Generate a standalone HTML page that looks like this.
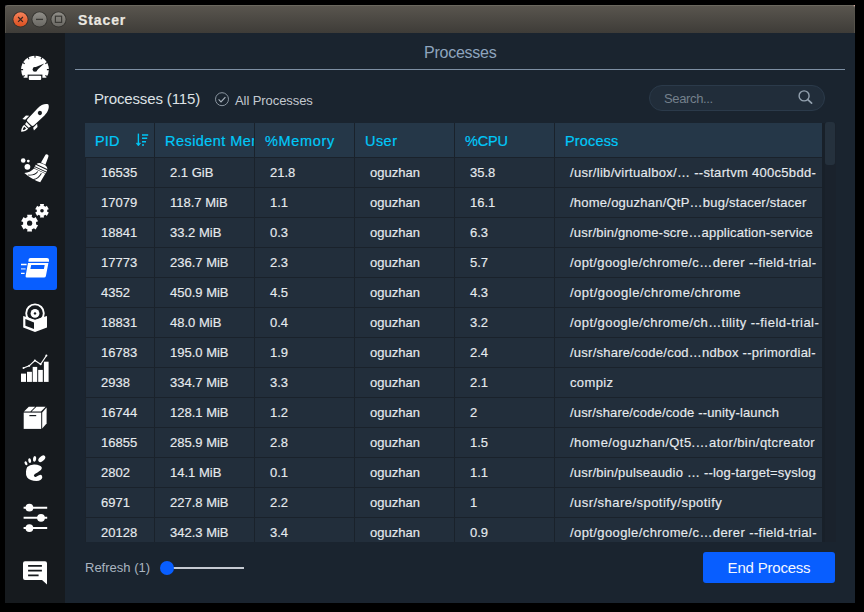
<!DOCTYPE html>
<html><head><meta charset="utf-8">
<style>
*{margin:0;padding:0;box-sizing:border-box}
html,body{width:864px;height:612px;overflow:hidden;background:#000;font-family:"Liberation Sans",sans-serif;position:relative}
div,svg{position:absolute}
#win{left:5px;top:5px;width:850px;height:598px;background:#1a242f}
#titlebar{left:5px;top:5px;width:850px;height:28px;background:linear-gradient(#5a564f,#3e3c38);border-radius:4px 4px 0 0;box-shadow:inset 0 1px 0 #6b685f,inset 1px 0 0 #55524b,inset -1px 0 0 #55524b}
#side{left:5px;top:33px;width:60px;height:570px;background:#161a1e}
.wb{top:12px;width:15px;height:15px;border-radius:50%}
#ttl{left:78px;top:12px;font-size:14px;line-height:16px;font-weight:bold;color:#ebe8e1;letter-spacing:0.9px;-webkit-text-stroke:0.2px #ebe8e1;white-space:nowrap}
.t{white-space:nowrap}
#tbl{left:85px;top:123px;width:737px;height:419px;background:#1a222b;overflow:hidden}
.hd{top:0;height:34px;background:#253748;color:#00c8f8;-webkit-text-stroke:0.2px #00c8f8;font-size:14.5px;letter-spacing:0.45px;line-height:36px;padding-left:10px;overflow:hidden;white-space:nowrap}
.c{height:29px;background:#222e3b;color:#e6eaee;-webkit-text-stroke:0.15px #e6eaee;font-size:13px;line-height:30px;padding-left:15px;overflow:hidden;white-space:nowrap}
.ic{left:5px;width:60px;height:50px}
</style></head><body>
<div id="win"></div>
<div style="left:5px;top:5px;width:5px;height:5px;background:#2d2a33"></div>
<div style="left:850px;top:5px;width:5px;height:5px;background:#d6aca2"></div>
<div id="titlebar"></div>
<svg style="left:5px;top:5px" width="70" height="28" viewBox="5 5 70 28">
<defs>
<linearGradient id="gr" x1="0" y1="0" x2="0" y2="1"><stop offset="0" stop-color="#f5825a"/><stop offset="1" stop-color="#dc5020"/></linearGradient>
<linearGradient id="gg" x1="0" y1="0" x2="0" y2="1"><stop offset="0" stop-color="#908e88"/><stop offset="1" stop-color="#6a6863"/></linearGradient>
</defs>
<circle cx="20.5" cy="19.4" r="8" fill="#34302b"/>
<circle cx="20.5" cy="19.4" r="7.1" fill="url(#gr)"/>
<path d="M18.1,17 L22.9,21.8 M22.9,17 L18.1,21.8" stroke="#3a2620" stroke-width="1.2"/>
<circle cx="39.5" cy="19.4" r="8" fill="#33322e"/>
<circle cx="39.5" cy="19.4" r="7.1" fill="url(#gg)"/>
<path d="M36,19.4 H43" stroke="#3b3a36" stroke-width="1.3"/>
<circle cx="58.5" cy="19.4" r="8" fill="#33322e"/>
<circle cx="58.5" cy="19.4" r="7.1" fill="url(#gg)"/>
<rect x="55.4" y="16.2" width="6.2" height="6.2" fill="none" stroke="#3b3a36" stroke-width="1.2"/>
</svg>
<div id="ttl">Stacer</div>
<div id="side"></div>
<div style="left:13px;top:246px;width:44px;height:44px;background:#085eff;border-radius:3px"></div>
<svg style="left:5px;top:33px" width="60" height="570" viewBox="5 33 60 570"><defs><clipPath id="gclip"><rect x="15" y="50" width="40" height="27.7"/></clipPath></defs><circle cx="35" cy="69.6" r="13.9" fill="#fff" clip-path="url(#gclip)"/><rect x="27.6" y="74.6" width="14.8" height="6" fill="#161a1e"/><rect x="28.8" y="75.8" width="12.4" height="4.2" rx="1" fill="#fff"/><path d="M46.90,69.60L49.50,69.60M45.31,63.65L47.56,62.35M40.95,59.29L42.25,57.04M35.00,57.70L35.00,55.10M29.05,59.29L27.75,57.04M24.69,63.65L22.44,62.35M23.10,69.60L20.50,69.60M45.31,75.55L47.56,76.85M24.69,75.55L22.44,76.85" stroke="#161a1e" stroke-width="1.1"/><circle cx="35" cy="69.4" r="2.4" fill="#161a1e"/><path d="M35.95,70.93 L44.30,63.60 L34.05,67.87Z" fill="#161a1e"/><g transform="translate(48.4,104.5) rotate(45)"><path d="M0,0 C2.9,1.2 5,5.5 5,10.5 L4.5,25.2 Q4.3,26.8 2.9,26.8 L-2.9,26.8 Q-4.3,26.8 -4.5,25.2 L-5,10.5 C-5,5.5 -2.9,1.2 0,0Z" fill="#fff"/><circle cx="0" cy="12" r="2.1" fill="#161a1e"/><path d="M-3.1,28 L3.1,28 L2.6,30.4 L-2.6,30.4Z" fill="#fff"/><path d="M-2.9,31.4 L2.9,31.4 Q3.1,35.4 0,38.6 Q-3.1,35.4 -2.9,31.4Z" fill="#fff"/><path d="M-1.2,32.8 L1.2,32.8 Q1.3,34.8 0,36.2 Q-1.3,34.8 -1.2,32.8Z" fill="#161a1e"/><path d="M5.6,21.6 L8.2,23.6 L8.2,28.6 L5.6,27.2Z" fill="#fff"/><path d="M-5.6,21.6 L-8.2,23.6 L-8.2,28.6 L-5.6,27.2Z" fill="#fff"/></g><circle cx="23.2" cy="160.5" r="2.3" fill="#fff"/><circle cx="28.3" cy="161.1" r="1.4" fill="#fff"/><circle cx="27.4" cy="166.8" r="2.9" fill="#fff"/><g transform="translate(47.1,155.3) rotate(25)"><path d="M-1.8,1 Q-1.8,-0.9 0,-0.9 Q1.8,-0.9 1.8,1 L2.4,9.2 L-2.4,9.2Z" fill="#fff"/><path d="M-6.3,13.4 Q-5.8,9.6 0,9.6 Q5.8,9.6 6.3,13.4 L6.4,17 L-6.4,17Z" fill="#fff"/><path d="M-6.5,12.9 L6.5,12.9 M-6.5,15.5 L6.5,15.5" stroke="#161a1e" stroke-width="0.9"/><path d="M-6.3,17.6 L6.2,17.6 L5.2,27.4 Q-4,28.2 -13.2,25.6 Q-8,23 -6.3,17.6Z" fill="#fff"/><path d="M-1.6,18.6 Q-2.6,23.8 -8.8,25.9 M2.4,18.6 Q2,24.8 -2.2,27.7" stroke="#161a1e" stroke-width="0.9" fill="none"/></g><path d="M35.86,221.09 L37.94,220.73 L37.94,225.67 L35.86,225.31 L34.55,227.56 L35.91,229.19 L31.63,231.66 L30.90,229.67 L28.30,229.67 L27.57,231.66 L23.29,229.19 L24.65,227.56 L23.34,225.31 L21.26,225.67 L21.26,220.73 L23.34,221.09 L24.65,218.84 L23.29,217.21 L27.57,214.74 L28.30,216.73 L30.90,216.73 L31.63,214.74 L35.91,217.21 L34.55,218.84Z" fill="#fff" transform="rotate(30 29.6 223.2)"/><circle cx="29.6" cy="223.2" r="2.6" fill="#161a1e"/><path d="M47.02,209.11 L48.71,208.81 L48.71,212.79 L47.02,212.49 L45.98,214.30 L47.08,215.62 L43.63,217.61 L43.05,216.00 L40.95,216.00 L40.37,217.61 L36.92,215.62 L38.02,214.30 L36.98,212.49 L35.29,212.79 L35.29,208.81 L36.98,209.11 L38.02,207.30 L36.92,205.98 L40.37,203.99 L40.95,205.60 L43.05,205.60 L43.63,203.99 L47.08,205.98 L45.98,207.30Z" fill="#fff" transform="rotate(30 42 210.8)"/><circle cx="42" cy="210.8" r="1.8" fill="#161a1e"/><path d="M28.5,261.7 L28.5,260.1 Q28.5,258.1 30.5,258.1 L47,258.1 Q49,258.1 49,260.1 L49,261.7Z" fill="#fff"/><path d="M28,263 L48.4,263 L45.9,276 Q45.6,277.5 44,277.5 L27,277.5 Q25.3,277.5 25.6,276Z" fill="#fff"/><path d="M31.2,265 L44.7,265 L43.9,268.9 L30.4,268.9Z" fill="#085eff"/><path d="M21,264.5H26.6M21,273.4H24.6" stroke="#fff" stroke-width="1.3"/><path d="M21,268.9H25.6" stroke="#fff" stroke-opacity="0.75" stroke-width="1.3"/><circle cx="35" cy="313.2" r="8.8" fill="none" stroke="#fff" stroke-width="1.9"/><path d="M23.2,316 L35,319.6 L47,316 L47,327.4 L35,332 L23.2,327.4Z" fill="#fff"/><path d="M25.4,319.1 L34,322.5 L34,329.1 L25.4,325.8Z" fill="#161a1e"/><circle cx="35" cy="313.4" r="6.1" fill="#161a1e"/><circle cx="35" cy="313.4" r="4.4" fill="#fff"/><circle cx="35" cy="313.4" r="1.2" fill="#161a1e"/><rect x="21" y="373.6" width="5.0" height="8.3" fill="#fff"/><rect x="27" y="371.8" width="4.9" height="10.1" fill="#fff"/><rect x="32.7" y="366.9" width="4.5" height="15.0" fill="#fff"/><rect x="38.2" y="369.9" width="4.6" height="12.0" fill="#fff"/><rect x="43.9" y="361.7" width="4.7" height="20.2" fill="#fff"/><path d="M23.5,368 L29.2,365.8 L34.9,360.5 L40.6,364.2 L46.4,355.6" stroke="#fff" stroke-width="1.1" fill="none"/><circle cx="23.5" cy="368" r="1.0" fill="#fff"/><circle cx="29.2" cy="365.8" r="1.0" fill="#fff"/><circle cx="34.9" cy="360.5" r="1.0" fill="#fff"/><circle cx="40.6" cy="364.2" r="1.0" fill="#fff"/><circle cx="46.4" cy="355.6" r="1.0" fill="#fff"/><path d="M23.7,412.6 L41.2,412.6 L41.2,428.9 L23.7,428.9Z" fill="#fff"/><path d="M42.2,412.6 L46.6,407.6 L46.6,423.5 L42.2,428.4Z" fill="#fff"/><path d="M24,411.6 L28.8,406.8 L35.2,406.8 L30.4,411.6Z M31.6,411.6 L36.4,406.8 L45.6,406.8 L41,411.6Z" fill="#fff"/><path d="M29.4,415.6H36.2" stroke="#161a1e" stroke-width="1.2"/><path d="M27.2,467 Q30,464.2 34.5,464.4 Q40.5,464.6 41.8,467.6 Q42.2,470 37.5,472.4 Q34,474 33.8,475.6 Q34.3,477.5 36.2,476.8 Q38.5,475.2 40.5,474.8 Q42.5,474.8 42.3,477.4 Q41.5,480.8 36.5,481 Q30,481 27.2,477.6 Q25.6,475 26,471.5 Q26.3,468.8 27.2,467Z" fill="#fff"/><ellipse cx="41.8" cy="458.8" rx="2.4" ry="4.1" transform="rotate(48 41.8 458.8)" fill="#fff"/><ellipse cx="34.6" cy="458.9" rx="1.6" ry="2.9" transform="rotate(8 34.6 458.9)" fill="#fff"/><ellipse cx="29.7" cy="460.6" rx="1.4" ry="2.4" transform="rotate(-12 29.7 460.6)" fill="#fff"/><ellipse cx="26" cy="463.3" rx="1.2" ry="2.1" transform="rotate(-30 26 463.3)" fill="#fff"/><path d="M23.6,507.7H47.2M23.6,517.8H47.2M23.6,528.1H47.2" stroke="#fff" stroke-width="2"/><circle cx="29.4" cy="507.7" r="3.9" fill="#fff"/><circle cx="41" cy="517.8" r="3.9" fill="#fff"/><circle cx="29.4" cy="528.1" r="3.9" fill="#fff"/><path d="M25,561.2 L45,561.2 Q47,561.2 47,563.2 L47,584.6 L42,580 L25,580 Q23,580 23,578 L23,563.2 Q23,561.2 25,561.2Z" fill="#fff"/><path d="M28.1,565.8H41.9M28.1,570.7H41.9M28.1,575.3H38.6" stroke="#161a1e" stroke-width="1.8"/></svg>
<div id="tbl">
<div class="hd" style="left:0px;width:69px;letter-spacing:0.1px">PID</div>
<div class="hd" style="left:70px;width:99px;letter-spacing:0.45px">Resident Memory</div>
<div class="hd" style="left:170px;width:99px;letter-spacing:0.65px">%Memory</div>
<div class="hd" style="left:270px;width:99px;letter-spacing:0.45px">User</div>
<div class="hd" style="left:370px;width:99px;letter-spacing:-0.2px">%CPU</div>
<div class="hd" style="left:470px;width:267px;letter-spacing:0.15px">Process</div>
<div class="c" style="left:1px;top:35px;width:68px">16535</div><div class="c" style="left:70px;top:35px;width:99px">2.1 GiB</div><div class="c" style="left:170px;top:35px;width:99px">21.8</div><div class="c" style="left:270px;top:35px;width:99px">oguzhan</div><div class="c" style="left:370px;top:35px;width:99px">35.8</div><div class="c" style="left:470px;top:35px;width:267px;letter-spacing:0.292px">/usr/lib/virtualbox/… --startvm 400c5bdd-</div>
<div class="c" style="left:1px;top:65px;width:68px">17079</div><div class="c" style="left:70px;top:65px;width:99px">118.7 MiB</div><div class="c" style="left:170px;top:65px;width:99px">1.1</div><div class="c" style="left:270px;top:65px;width:99px">oguzhan</div><div class="c" style="left:370px;top:65px;width:99px">16.1</div><div class="c" style="left:470px;top:65px;width:267px;letter-spacing:0.235px">/home/oguzhan/QtP…bug/stacer/stacer</div>
<div class="c" style="left:1px;top:95px;width:68px">18841</div><div class="c" style="left:70px;top:95px;width:99px">33.2 MiB</div><div class="c" style="left:170px;top:95px;width:99px">0.3</div><div class="c" style="left:270px;top:95px;width:99px">oguzhan</div><div class="c" style="left:370px;top:95px;width:99px">6.3</div><div class="c" style="left:470px;top:95px;width:267px;letter-spacing:0.187px">/usr/bin/gnome-scre…application-service</div>
<div class="c" style="left:1px;top:125px;width:68px">17773</div><div class="c" style="left:70px;top:125px;width:99px">236.7 MiB</div><div class="c" style="left:170px;top:125px;width:99px">2.3</div><div class="c" style="left:270px;top:125px;width:99px">oguzhan</div><div class="c" style="left:370px;top:125px;width:99px">5.7</div><div class="c" style="left:470px;top:125px;width:267px;letter-spacing:0.392px">/opt/google/chrome/c…derer --field-trial-</div>
<div class="c" style="left:1px;top:155px;width:68px">4352</div><div class="c" style="left:70px;top:155px;width:99px">450.9 MiB</div><div class="c" style="left:170px;top:155px;width:99px">4.5</div><div class="c" style="left:270px;top:155px;width:99px">oguzhan</div><div class="c" style="left:370px;top:155px;width:99px">4.3</div><div class="c" style="left:470px;top:155px;width:267px;letter-spacing:0.508px">/opt/google/chrome/chrome</div>
<div class="c" style="left:1px;top:185px;width:68px">18831</div><div class="c" style="left:70px;top:185px;width:99px">48.0 MiB</div><div class="c" style="left:170px;top:185px;width:99px">0.4</div><div class="c" style="left:270px;top:185px;width:99px">oguzhan</div><div class="c" style="left:370px;top:185px;width:99px">3.2</div><div class="c" style="left:470px;top:185px;width:267px;letter-spacing:0.452px">/opt/google/chrome/ch…tility --field-trial-</div>
<div class="c" style="left:1px;top:215px;width:68px">16783</div><div class="c" style="left:70px;top:215px;width:99px">195.0 MiB</div><div class="c" style="left:170px;top:215px;width:99px">1.9</div><div class="c" style="left:270px;top:215px;width:99px">oguzhan</div><div class="c" style="left:370px;top:215px;width:99px">2.4</div><div class="c" style="left:470px;top:215px;width:267px;letter-spacing:0.245px">/usr/share/code/cod…ndbox --primordial-</div>
<div class="c" style="left:1px;top:245px;width:68px">2938</div><div class="c" style="left:70px;top:245px;width:99px">334.7 MiB</div><div class="c" style="left:170px;top:245px;width:99px">3.3</div><div class="c" style="left:270px;top:245px;width:99px">oguzhan</div><div class="c" style="left:370px;top:245px;width:99px">2.1</div><div class="c" style="left:470px;top:245px;width:267px;letter-spacing:0.36px">compiz</div>
<div class="c" style="left:1px;top:275px;width:68px">16744</div><div class="c" style="left:70px;top:275px;width:99px">128.1 MiB</div><div class="c" style="left:170px;top:275px;width:99px">1.2</div><div class="c" style="left:270px;top:275px;width:99px">oguzhan</div><div class="c" style="left:370px;top:275px;width:99px">2</div><div class="c" style="left:470px;top:275px;width:267px;letter-spacing:0.153px">/usr/share/code/code --unity-launch</div>
<div class="c" style="left:1px;top:305px;width:68px">16855</div><div class="c" style="left:70px;top:305px;width:99px">285.9 MiB</div><div class="c" style="left:170px;top:305px;width:99px">2.8</div><div class="c" style="left:270px;top:305px;width:99px">oguzhan</div><div class="c" style="left:370px;top:305px;width:99px">1.5</div><div class="c" style="left:470px;top:305px;width:267px;letter-spacing:0.433px">/home/oguzhan/Qt5.…ator/bin/qtcreator</div>
<div class="c" style="left:1px;top:335px;width:68px">2802</div><div class="c" style="left:70px;top:335px;width:99px">14.1 MiB</div><div class="c" style="left:170px;top:335px;width:99px">0.1</div><div class="c" style="left:270px;top:335px;width:99px">oguzhan</div><div class="c" style="left:370px;top:335px;width:99px">1.1</div><div class="c" style="left:470px;top:335px;width:267px;letter-spacing:0.208px">/usr/bin/pulseaudio … --log-target=syslog</div>
<div class="c" style="left:1px;top:365px;width:68px">6971</div><div class="c" style="left:70px;top:365px;width:99px">227.8 MiB</div><div class="c" style="left:170px;top:365px;width:99px">2.2</div><div class="c" style="left:270px;top:365px;width:99px">oguzhan</div><div class="c" style="left:370px;top:365px;width:99px">1</div><div class="c" style="left:470px;top:365px;width:267px;letter-spacing:0.464px">/usr/share/spotify/spotify</div>
<div class="c" style="left:1px;top:395px;width:68px">20128</div><div class="c" style="left:70px;top:395px;width:99px">342.3 MiB</div><div class="c" style="left:170px;top:395px;width:99px">3.4</div><div class="c" style="left:270px;top:395px;width:99px">oguzhan</div><div class="c" style="left:370px;top:395px;width:99px">0.9</div><div class="c" style="left:470px;top:395px;width:267px;letter-spacing:0.4px">/opt/google/chrome/c…derer --field-trial-</div>
</div>
<svg style="left:134px;top:130px" width="18" height="18" viewBox="134 130 18 18"><path d="M138.4,133.6 V145" stroke="#00c6f6" stroke-width="1.4"/><path d="M136.2,143.2 L138.4,145.9 L140.6,143.2Z" fill="#00c6f6" stroke="#00c6f6" stroke-width="0.6" stroke-linejoin="round"/><path d="M142,134.9 H148.2 M142,138.3 H147.2 M142,141.7 H146 M142,145.1 H144" stroke="#00c6f6" stroke-width="1.5"/></svg>
<div class="t" style="left:424px;top:44px;font-size:16px;line-height:18px;color:#8ea5be;letter-spacing:-0.25px">Processes</div>
<div style="left:75px;top:69px;width:770px;height:1px;background:#7d8fa3"></div>
<div class="t" style="left:94px;top:91px;font-size:15px;line-height:16px;color:#dde1e5;letter-spacing:-0.14px">Processes (115)</div>
<svg style="left:205px;top:86px" width="30" height="26" viewBox="205 86 30 26"><circle cx="222" cy="99.2" r="6.5" fill="none" stroke="#8b96a1" stroke-width="1"/><path d="M218.6,99.4 L221,101.8 L225.4,97.2" fill="none" stroke="#a9b3bd" stroke-width="1.2"/></svg>
<div class="t" style="left:235px;top:93px;font-size:13px;line-height:15px;color:#c3c9cf;letter-spacing:-0.08px">All Processes</div>
<div style="left:649px;top:85px;width:176px;height:26px;border-radius:13px;background:#212d3a;border:1px solid #2b3a4a"></div>
<div class="t" style="left:664px;top:91px;font-size:13px;line-height:15px;color:#74808c;letter-spacing:-0.35px">Search...</div>
<svg style="left:790px;top:84px" width="30" height="28" viewBox="790 84 30 28"><circle cx="804.1" cy="95.9" r="5" fill="none" stroke="#93a1af" stroke-width="1.4"/><path d="M807.8,99.6 L811.6,103.2" stroke="#93a1af" stroke-width="1.7" stroke-linecap="round"/></svg>
<div style="left:822px;top:123px;width:14px;height:419px;background:#1a222c"></div><div style="left:822px;top:123px;width:3px;height:419px;background:#182029"></div><div style="left:825px;top:122px;width:10px;height:43px;border-radius:3px;background:#25313d"></div>
<div class="t" style="left:85px;top:560px;font-size:13px;line-height:15px;color:#aab5c0">Refresh (1)</div>
<div style="left:167px;top:567px;width:77px;height:2px;background:#c5cad2"></div>
<div style="left:160px;top:561px;width:14px;height:14px;border-radius:50%;background:#085eff"></div>
<div style="left:703px;top:552px;width:132px;height:31px;border-radius:3px;background:#085eff"></div>
<div class="t" style="left:703px;top:559px;width:132px;text-align:center;font-size:15px;line-height:17px;color:#f4f7ff;letter-spacing:-0.2px">End Process</div>
</body></html>
